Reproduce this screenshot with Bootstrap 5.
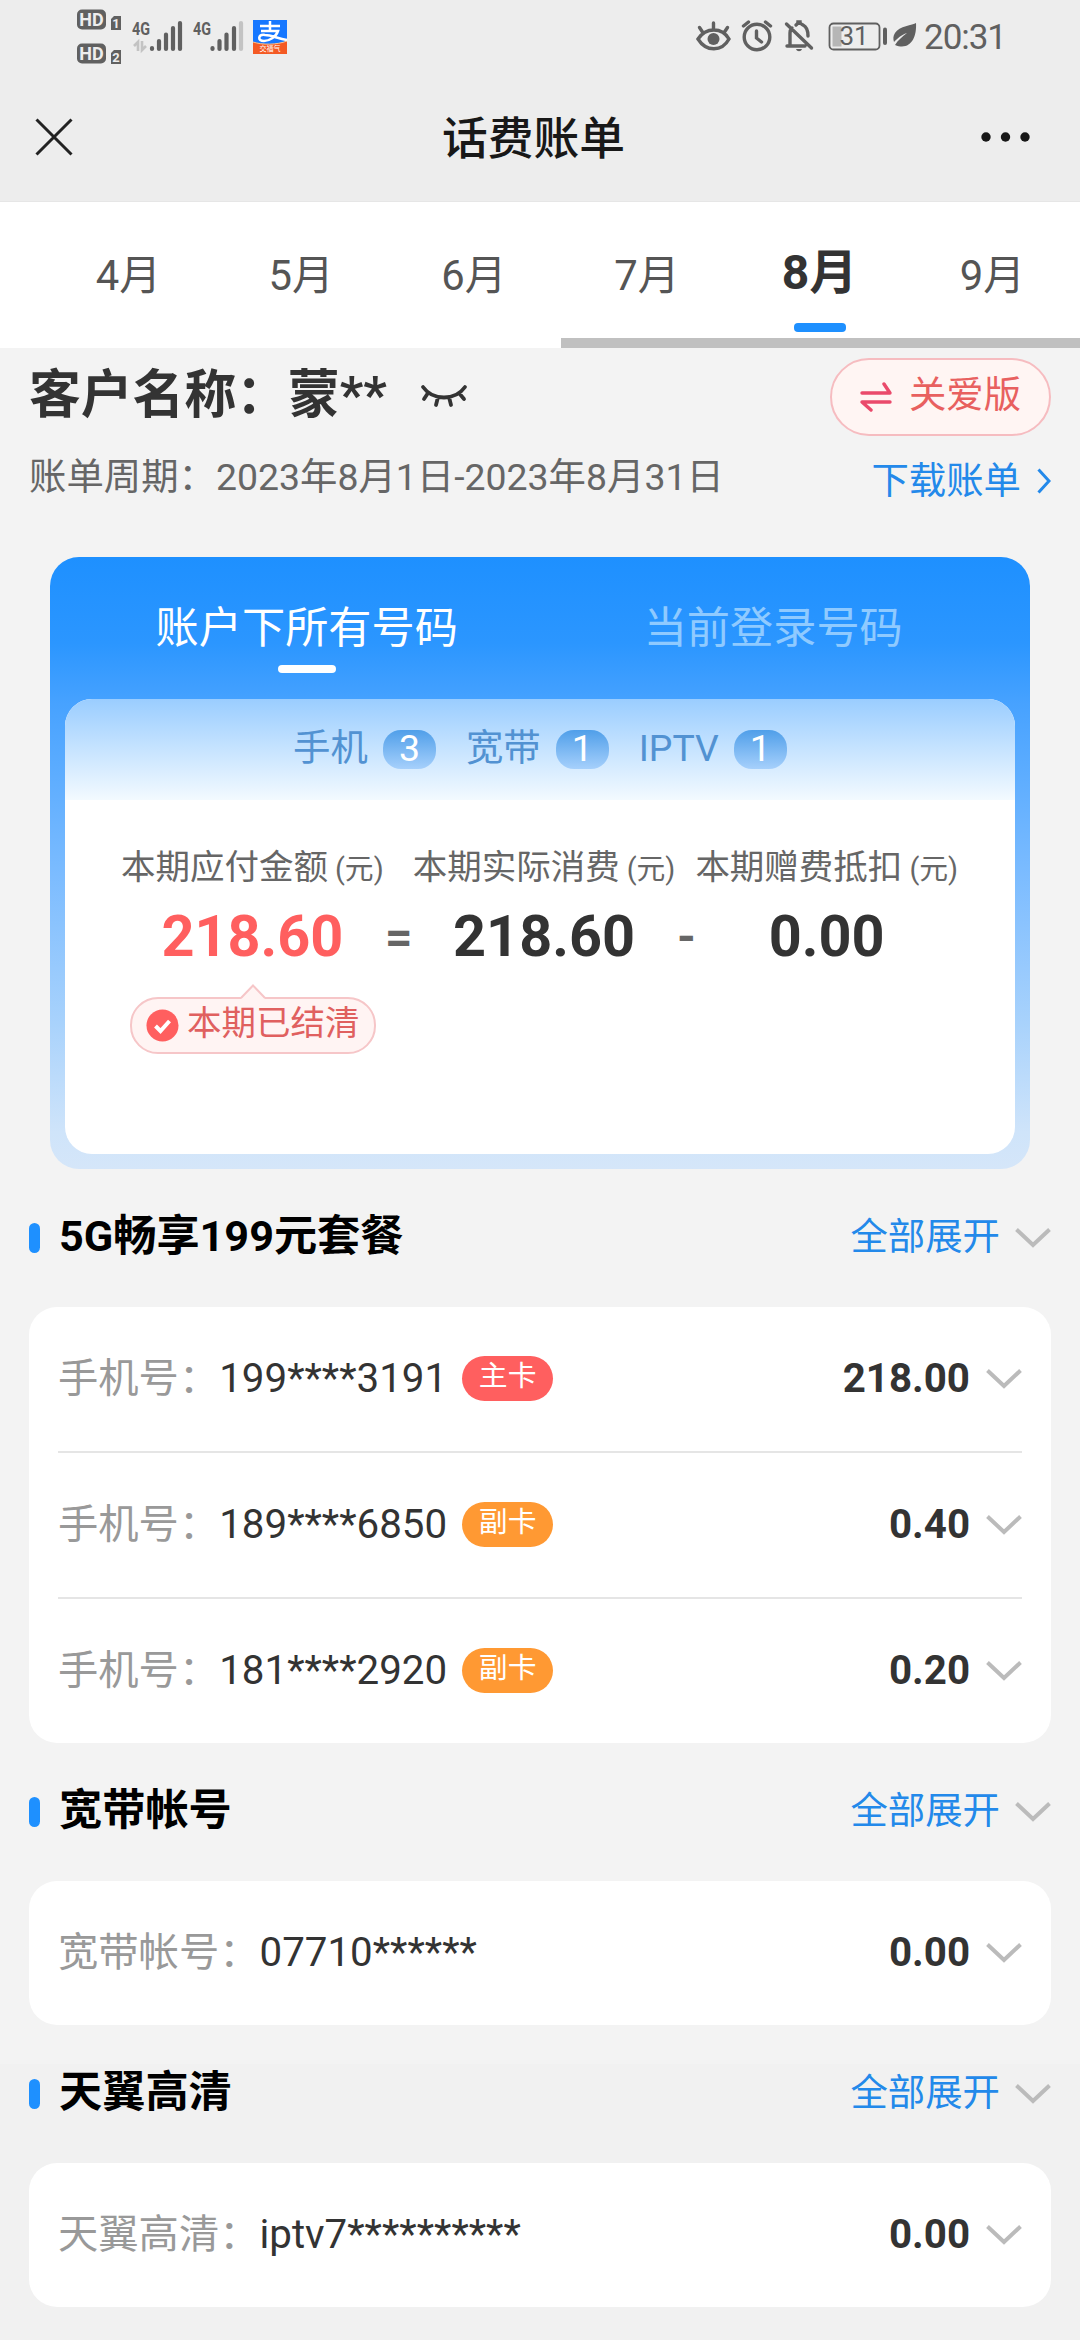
<!DOCTYPE html>
<html lang="zh-CN">
<head>
<meta charset="utf-8">
<meta name="viewport" content="width=device-width, initial-scale=1">
<title>话费账单</title>
<link rel="stylesheet" href="https://cdn.jsdelivr.net/npm/bootstrap@5.3.0/dist/css/bootstrap.min.css">
<style>
html,body{height:2340px;overflow:hidden}
body{font-family:Roboto,"Noto Sans CJK SC",sans-serif;line-height:1;color:#333;background:linear-gradient(#f3f3f3 2064px,#f1f1f1 2064px)}
svg{display:block;flex:none}
.sys-bar{height:72px;background:#ededed}
.sys-bar svg text{font-family:Roboto,sans-serif}
.title-bar{height:130px;background:#ededed;padding:0 49px 0 35px;border-bottom:1px solid #e6e6e6}
.title-bar h1{font-size:45.8px;font-weight:500;color:#181818;line-height:60px;padding:7px 0 0 13px}
.months{height:146px;background:#fff;padding-left:42px;overflow:hidden}
.months .month{flex:0 0 172.8px;height:136px;font-size:41.8px;color:#555;padding-top:52px;line-height:44px}
.months .month.active{font-size:48px;font-weight:700;color:#333;padding-top:49px}
.month-mark{width:52px;height:9px;border-radius:4px;background:#1e90ff;margin-top:28px}
.scroll-thumb{height:10px;width:519px;background:#c0c0c0}
.customer{padding:10px 29px 0 29px;height:209px}
.cust-name{font-size:51.8px;font-weight:700;line-height:70px;padding-top:3px;height:78px}
.cust-name svg{margin:21px 0 0 24px}
.care-btn{width:221px;height:78px;border:2px solid #f6bcc0;border-radius:39px;background:#fff5f3;color:#e8605f;font-size:37.4px;gap:17px;padding-bottom:1px}
.care-btn span{padding-bottom:2px}
.period{font-size:37.4px;color:#666;line-height:50px}
.dl{font-size:37.4px;color:#2389ea;line-height:50px;gap:16px;padding-top:4px}
.bill{margin:0 50px;height:612px;border-radius:29px;background:linear-gradient(#1e90ff 0,#2b96ff 14%,#47a2ff 24%,#7cbcff 52%,#a8d2fc 76%,#cfe4fa 94%,#d5e6f9 100%);padding:0 15px 15px}
.bill-tabs{height:142px;padding:0 8.5px;font-size:43.2px;color:#fff}
.bill-tabs>div{padding-top:47px;line-height:50px}
.bill-tabs .off{color:#8fcaff}
.tab-mark{width:58px;height:8px;border-radius:4px;background:#fff;margin-top:11px}
.sheet{height:455px;background:#fff;border-radius:27px;overflow:hidden}
.kinds{height:101px;background:linear-gradient(#9acdff,#f3faff);font-size:37.4px;color:#5292d2;gap:30px;padding-bottom:2px}
.kinds .kind{gap:15px}
.num{width:53px;height:39px;border-radius:18px;color:#fff;background:linear-gradient(#509fe9,#a6d0fc);line-height:37px;margin-top:2px}
.sums{padding:45px 0 0 56px;gap:29px}
.sum-label{font-size:34.5px;color:#666;line-height:44px;white-space:nowrap}
.sum-label span{font-size:28.8px;margin-left:7px}
.sum-val{font-size:57.6px;font-weight:700;line-height:64px;margin-top:14px}
.sum-due{color:#ff5f5f}
.third{margin-left:-9px}
.sign{font-size:48px;font-weight:700;color:#666;line-height:64px}
.s-eq{left:320px;top:106px}
.s-mi{left:612px;top:105px}
.settled{width:246px;height:57px;border:2px solid #f6c6c8;border-radius:28px;background:#fff4f3;margin:28px 0 0 65px;color:#e0605f;font-size:34.5px;gap:8px;padding:0 14px}
.settled .tip{position:absolute;left:108px;top:-15px}
.sec-head{height:138px;padding:0 29px}
.sec-bar{width:11px;height:30px;border-radius:6px;background:#1e90ff;margin-right:19px}
.sec-head h2{font-size:43.2px;font-weight:700;color:#000;line-height:56px;padding-bottom:3px}
.expand{font-size:37.4px;color:#2389ea;gap:15px}
.expand span{padding-bottom:1px}
.numbers{margin:0 29px;padding:0 29px;background:#fff;border-radius:28px}
.numbers .line{height:144px;font-size:40.3px}
.numbers .line+.line{border-top:2px solid #e5e5e5;height:146px}
.numbers .who{color:#999}
.numbers .tagx{width:91px;height:45px;border-radius:23px;background:#ff5f5f;color:#fff;font-size:28.8px;margin:0 0 2px 15px;line-height:41px}
.numbers .tagx.sub{background:#ff9933}
.amount{font-weight:700;margin-right:16px}
</style>
</head>
<body>
<div class="sys-bar d-flex justify-content-between">
  <svg width="320" height="72" viewBox="0 0 320 72" fill="#606060">
    <rect x="77" y="9.500" width="29" height="20" rx="5"/><rect x="77" y="43.500" width="29" height="20" rx="5"/>
    <g fill="#ededed" font-weight="700" font-size="18" text-anchor="middle"><text x="91.500" y="26">HD</text><text x="91.500" y="60">HD</text></g>
    <path d="M114 16h7v14h-10V19zM114 50h7v14h-10V53z"/>
    <g fill="#ededed" font-weight="700" font-size="13" text-anchor="middle"><text x="116" y="28">1</text><text x="116" y="62.300">2</text></g>
    <g font-weight="700" font-size="19"><text x="132" y="35" textLength="18" lengthAdjust="spacingAndGlyphs">4G</text><text x="193" y="35" textLength="18" lengthAdjust="spacingAndGlyphs">4G</text></g>
    <g stroke="#606060" stroke-width="4.200" stroke-linecap="round"><path d="M152 48v1M159 41v8M166 34.500V49M173 28v21M180 23v26M212.500 48v1M219.500 41v8M226.500 34.500V49M234 28v21"/><path stroke="#c3c3c3" d="M241 23v26"/></g>
    <path fill="none" stroke="#c3c3c3" stroke-width="2.600" d="M134 46l4-4v9M142 41v9l4-4"/>
    <rect x="253" y="20" width="34" height="34" fill="#1677ff"/>
    <path d="M253 42c10 3 24 3 34-1v13h-34z" fill="#f45a24"/>
    <path d="M253 42c9 3 24 3 34-1" stroke="#ffc48c" fill="none"/>
    <path d="M260 26h20M270 21v11M261 31h17c-2 6-9 10-14 10-7 0-6-7 1-6 7 0 13 4 22 5" fill="none" stroke="#fff" stroke-width="2.500"/>
    <text x="270" y="51" fill="#fff" font-size="7" text-anchor="middle" style="font-family:'Noto Sans CJK SC'">交福气</text>
  </svg>
  <svg width="400" height="72" viewBox="680 0 400 72" fill="none" stroke="#606060" stroke-width="3.400" stroke-linecap="round">
    <path d="M698 39c8-12 24-12 31 0-7 13-23 13-31 0zM713.500 29v-6M702.500 32l-3-4.500M724.500 32l3-4.500"/><circle cx="713.500" cy="39" r="6" fill="#606060" stroke="none"/>
    <circle cx="757" cy="37" r="12.800"/><path d="M756.500 31v7l5 4M743.500 26l5-4M770.500 26l-5-4"/>
    <path d="M786.500 24l25 24M787 46h18M790 45V33c0-2 1-4 2-5M796 25c1-1 2-1 2-3h2c0 2 1 2 3 3 4 2 5 5 5 11" /><path d="M796 49h6c-1 3-5 3-6 0z" fill="#606060" stroke="none"/>
    <rect x="829.500" y="23.500" width="50" height="26" rx="4" stroke-width="1.800"/><path d="M832.500 26.500h9v20h-9z" fill="#b6b6b6" stroke="none"/><path d="M885 29.500v13.500" stroke-width="4"/>
    <text x="854" y="45" fill="#606060" stroke="none" font-size="26" text-anchor="middle">31</text>
    <path d="M916 23c-3 2-17 3-21 10-2 3-2 6-1 9 4-4 7-7 13-9-5 4-9 7-12 12 15 6 22-7 21-22z" fill="#606060" stroke="none"/>
    <text x="924" y="49" fill="#606060" stroke="none" font-size="35" textLength="83">20:31</text>
  </svg>
</div>
<header class="title-bar d-flex align-items-center justify-content-between">
  <svg width="38" height="38" viewBox="0 0 38 38" fill="none" stroke="#222" stroke-width="3"><path d="M1.500 1.500l35 35M36.500 1.500l-35 35"/></svg>
  <h1 class="m-0">话费账单</h1>
  <svg width="50" height="10" viewBox="0 0 50 10" fill="#181818"><circle cx="5" cy="5" r="4.700"/><circle cx="24.500" cy="5" r="4.700"/><circle cx="44" cy="5" r="4.700"/></svg>
</header>
<nav class="months">
  <div class="d-flex text-center">
    <div class="month">4月</div><div class="month">5月</div><div class="month">6月</div><div class="month">7月</div>
    <div class="month active">8月<div class="month-mark mx-auto"></div></div><div class="month">9月</div>
  </div>
  <div class="scroll-thumb ms-auto"></div>
</nav>
<section class="customer">
  <div class="d-flex justify-content-between">
    <div class="d-flex cust-name">客户名称：蒙**
      <svg width="60" height="38" viewBox="-10 0 60 38" fill="none" stroke="#333" stroke-width="3.800" stroke-linecap="round"><path d="M2 5c10 14 32 14 42 0M7 11l-4 6M17 15l-2 8M28 15l2 8M38 11l5 6"/></svg>
    </div>
    <div class="care-btn d-flex align-items-center justify-content-center">
      <svg width="32" height="30" viewBox="0 0 32 30" fill="none" stroke="#ea4a6b" stroke-width="3.400" stroke-linecap="round" stroke-linejoin="round"><path d="M2 11h28l-6-9M30 20H2l9 8"/></svg><span>关爱版</span></div>
  </div>
  <div class="d-flex justify-content-between pt-3">
    <div class="period">账单周期：2023年8月1日-2023年8月31日</div>
    <div class="dl d-flex align-items-center">下载账单<svg width="14" height="26" viewBox="0 0 14 26" fill="none" stroke="#2389ea" stroke-width="3"><path d="M1.500 1.500L12 13 1.500 24.500"/></svg></div>
  </div>
</section>
<section class="bill">
  <div class="bill-tabs row g-0 text-center">
    <div class="col-6">账户下所有号码<div class="tab-mark mx-auto"></div></div>
    <div class="col-6 off">当前登录号码</div>
  </div>
  <div class="sheet">
    <div class="kinds d-flex justify-content-center align-items-center">
      <div class="kind d-flex align-items-center">手机<span class="num text-center">3</span></div>
      <div class="kind d-flex align-items-center">宽带<span class="num text-center">1</span></div>
      <div class="kind d-flex align-items-center">IPTV<span class="num text-center">1</span></div>
    </div>
    <div class="sums d-flex text-center position-relative">
      <div><div class="sum-label">本期应付金额<span>(元)</span></div><div class="sum-val sum-due">218.60</div></div>
      <div><div class="sum-label">本期实际消费<span>(元)</span></div><div class="sum-val">218.60</div></div>
      <div class="third"><div class="sum-label">本期赠费抵扣<span>(元)</span></div><div class="sum-val">0.00</div></div>
      <div class="sign position-absolute s-eq">=</div><div class="sign position-absolute s-mi">-</div>
    </div>
    <div class="settled d-flex align-items-center position-relative">
      <svg class="tip" width="26" height="16" viewBox="0 0 26 16"><path d="M0 16L13 1.500 26 16z" fill="#fff4f3"/><path d="M1 14L13 1.500 25 14" fill="none" stroke="#f6c6c8" stroke-width="2"/></svg>
      <svg width="33" height="33" viewBox="0 0 33 33"><circle cx="16.500" cy="16.500" r="16" fill="#ff5f5f"/><path d="M9.500 17l5 5 9-10" fill="none" stroke="#fff" stroke-width="4"/></svg>
      <span class="pb-1 text-nowrap">本期已结清</span>
    </div>
  </div>
</section>
<section>
  <div class="sec-head d-flex align-items-center"><i class="sec-bar"></i><h2 class="m-0">5G畅享199元套餐</h2>
    <div class="expand d-flex align-items-center ms-auto"><span>全部展开</span><svg width="36" height="20" viewBox="0 0 36 20" fill="none" stroke="#bbb" stroke-width="4"><path d="M1.500 1.500L18 17 34.500 1.500"/></svg></div></div>
  <div class="numbers">
    <div class="line d-flex align-items-center"><span class="who">手机号：</span><span>199****3191</span><span class="tagx text-center">主卡</span><span class="amount ms-auto">218.00</span><svg width="36" height="20" viewBox="0 0 36 20" fill="none" stroke="#bbb" stroke-width="4"><path d="M1.500 1.500L18 17 34.500 1.500"/></svg></div>
    <div class="line d-flex align-items-center"><span class="who">手机号：</span><span>189****6850</span><span class="tagx sub text-center">副卡</span><span class="amount ms-auto">0.40</span><svg width="36" height="20" viewBox="0 0 36 20" fill="none" stroke="#bbb" stroke-width="4"><path d="M1.500 1.500L18 17 34.500 1.500"/></svg></div>
    <div class="line d-flex align-items-center"><span class="who">手机号：</span><span>181****2920</span><span class="tagx sub text-center">副卡</span><span class="amount ms-auto">0.20</span><svg width="36" height="20" viewBox="0 0 36 20" fill="none" stroke="#bbb" stroke-width="4"><path d="M1.500 1.500L18 17 34.500 1.500"/></svg></div>
  </div>
</section>
<section>
  <div class="sec-head d-flex align-items-center"><i class="sec-bar"></i><h2 class="m-0">宽带帐号</h2>
    <div class="expand d-flex align-items-center ms-auto"><span>全部展开</span><svg width="36" height="20" viewBox="0 0 36 20" fill="none" stroke="#bbb" stroke-width="4"><path d="M1.500 1.500L18 17 34.500 1.500"/></svg></div></div>
  <div class="numbers">
    <div class="line d-flex align-items-center"><span class="who">宽带帐号：</span><span>07710******</span><span class="amount ms-auto">0.00</span><svg width="36" height="20" viewBox="0 0 36 20" fill="none" stroke="#bbb" stroke-width="4"><path d="M1.500 1.500L18 17 34.500 1.500"/></svg></div>
  </div>
</section>
<section>
  <div class="sec-head d-flex align-items-center"><i class="sec-bar"></i><h2 class="m-0">天翼高清</h2>
    <div class="expand d-flex align-items-center ms-auto"><span>全部展开</span><svg width="36" height="20" viewBox="0 0 36 20" fill="none" stroke="#bbb" stroke-width="4"><path d="M1.500 1.500L18 17 34.500 1.500"/></svg></div></div>
  <div class="numbers">
    <div class="line d-flex align-items-center"><span class="who">天翼高清：</span><span>iptv7**********</span><span class="amount ms-auto">0.00</span><svg width="36" height="20" viewBox="0 0 36 20" fill="none" stroke="#bbb" stroke-width="4"><path d="M1.500 1.500L18 17 34.500 1.500"/></svg></div>
  </div>
</section>
<script src="https://cdn.jsdelivr.net/npm/bootstrap@5.3.0/dist/js/bootstrap.bundle.min.js"></script>
</body>
</html>
